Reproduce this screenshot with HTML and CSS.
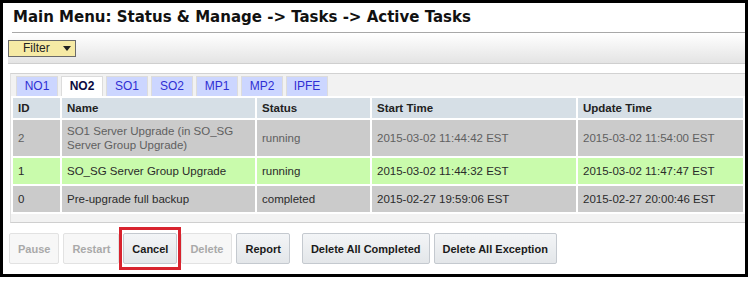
FILE: index.html
```html
<!DOCTYPE html>
<html>
<head>
<meta charset="utf-8">
<title>Active Tasks</title>
<link rel="stylesheet" href="styles.css">
</head>
<body>
<div class="frame">
  <h1 class="title">Main Menu: Status &amp; Manage -&gt; Tasks -&gt; Active Tasks</h1>
  <div class="toolbar">
    <button class="filter">Filter <span class="caret"></span></button>
  </div>
  <div class="panel">
    <div class="tabs">
      <span class="tab">NO1</span>
      <span class="tab active">NO2</span>
      <span class="tab">SO1</span>
      <span class="tab">SO2</span>
      <span class="tab">MP1</span>
      <span class="tab">MP2</span>
      <span class="tab">IPFE</span>
    </div>
    <table class="tasks">
      <colgroup>
        <col class="c-id"><col class="c-name"><col class="c-status"><col class="c-start"><col>
      </colgroup>
      <thead>
        <tr><th>ID</th><th>Name</th><th>Status</th><th>Start Time</th><th>Update Time</th></tr>
      </thead>
      <tbody>
        <tr class="row-sub">
          <td>2</td><td>SO1 Server Upgrade (in SO_SG<br>Server Group Upgrade)</td><td>running</td><td>2015-03-02 11:44:42 EST</td><td>2015-03-02 11:54:00 EST</td>
        </tr>
        <tr class="row-active">
          <td>1</td><td>SO_SG Server Group Upgrade</td><td>running</td><td>2015-03-02 11:44:32 EST</td><td>2015-03-02 11:47:47 EST</td>
        </tr>
        <tr class="row-done">
          <td>0</td><td>Pre-upgrade full backup</td><td>completed</td><td>2015-02-27 19:59:06 EST</td><td>2015-02-27 20:00:46 EST</td>
        </tr>
      </tbody>
    </table>
  </div>
  <div class="actions">
    <button class="btn" disabled>Pause</button>
    <button class="btn" disabled>Restart</button>
    <span class="highlight"><button class="btn">Cancel</button></span>
    <button class="btn" disabled>Delete</button>
    <button class="btn">Report</button>
    <button class="btn wide-gap">Delete All Completed</button>
    <button class="btn">Delete All Exception</button>
  </div>
</div>
</body>
</html>
```

FILE: styles.css
```css
html, body {
  margin: 0;
  padding: 0;
  background: #ffffff;
}

.frame {
  box-sizing: border-box;
  width: 748px;
  height: 277px;
  border: 3px solid #000;
  padding: 0 0 0 5px;
  font-family: "Liberation Sans", Arial, sans-serif;
  color: #222;
}

.title {
  margin: 0 0 0 4px;
  padding: 5px 0 0 1px;
  height: 24px;
  font-family: "DejaVu Sans", Verdana, sans-serif;
  font-weight: bold;
  font-size: 15px;
  line-height: 18px;
  color: #111;
  border-bottom: 1px solid #a8a8a8;
}

.toolbar {
  height: 30px;
  background: linear-gradient(#ffffff, #e4e4e4);
  border-bottom: 1px solid #cfcfcf;
  display: flex;
  align-items: center;
  margin-bottom: 9px;
}

.filter {
  box-sizing: border-box;
  width: 68px;
  height: 17px;
  margin: 0;
  padding: 0 0 0 14px;
  border: 1px solid #6a6a6a;
  background: #f6eaa5;
  font-family: "Liberation Sans", Arial, sans-serif;
  font-size: 12px;
  color: #222;
  display: flex;
  align-items: center;
  gap: 13px;
}

.caret {
  width: 0;
  height: 0;
  border-left: 4px solid transparent;
  border-right: 4px solid transparent;
  border-top: 5px solid #222;
}

.panel {
  margin-left: 2px;
  background: #f2f2f2;
  border-top: 1px solid #d2d2d2;
  border-bottom: 1px solid #cfcfcf;
  border-left: 1px solid #e0e0e0;
  padding: 2px 0 8px 0;
}

.tabs {
  display: flex;
  gap: 3px;
  padding-left: 5px;
}

.tab {
  box-sizing: border-box;
  min-width: 42px;
  height: 20px;
  padding: 0 6px;
  border: 1px solid #dcdcdc;
  border-bottom: none;
  background: #ccd6ff;
  color: #2f2fd4;
  font-size: 12px;
  line-height: 19px;
  text-align: center;
}

.tab.active {
  background: #ffffff;
  color: #0a0a40;
  font-weight: bold;
}

.tasks {
  width: 100%;
  border-collapse: separate;
  border-spacing: 2px;
  background: #ffffff;
  font-size: 11.5px;
}

.c-id { width: 47px; }
.c-name { width: 193px; }
.c-status { width: 113px; }
.c-start { width: 204px; }

.tasks th {
  background: #d6dfe6;
  text-align: left;
  font-weight: bold;
  color: #222;
  padding: 3px 5px;
  line-height: 14px;
  height: 14px;
}

.tasks td {
  padding: 4px 5px;
  line-height: 14px;
  height: 18px;
  vertical-align: middle;
}

.row-sub td {
  background: #cbcbcb;
  color: #606060;
}

.row-active td {
  background: #c9fbac;
  color: #2a2a2a;
}

.row-done td {
  background: #cbcbcb;
  color: #2a2a2a;
}

.actions {
  display: flex;
  align-items: center;
  gap: 4px;
  margin-top: 10px;
  padding-left: 1px;
}

.btn {
  box-sizing: border-box;
  height: 31px;
  margin: 0;
  padding: 0 8px;
  border: 1px solid #c4c9cf;
  border-radius: 2px;
  background: linear-gradient(#f3f5f7, #e3e6e9);
  font-family: "Liberation Sans", Arial, sans-serif;
  font-weight: bold;
  font-size: 11px;
  color: #1a1a1a;
}

.btn:disabled {
  background: #f7f7f7;
  border-color: #e2e2e2;
  color: #a9a9a9;
}

.highlight {
  display: flex;
  padding: 3px 1px;
  margin: -6px -4px;
  border: 3px solid #d8232e;
}

.wide-gap {
  margin-left: 8px;
}
```
